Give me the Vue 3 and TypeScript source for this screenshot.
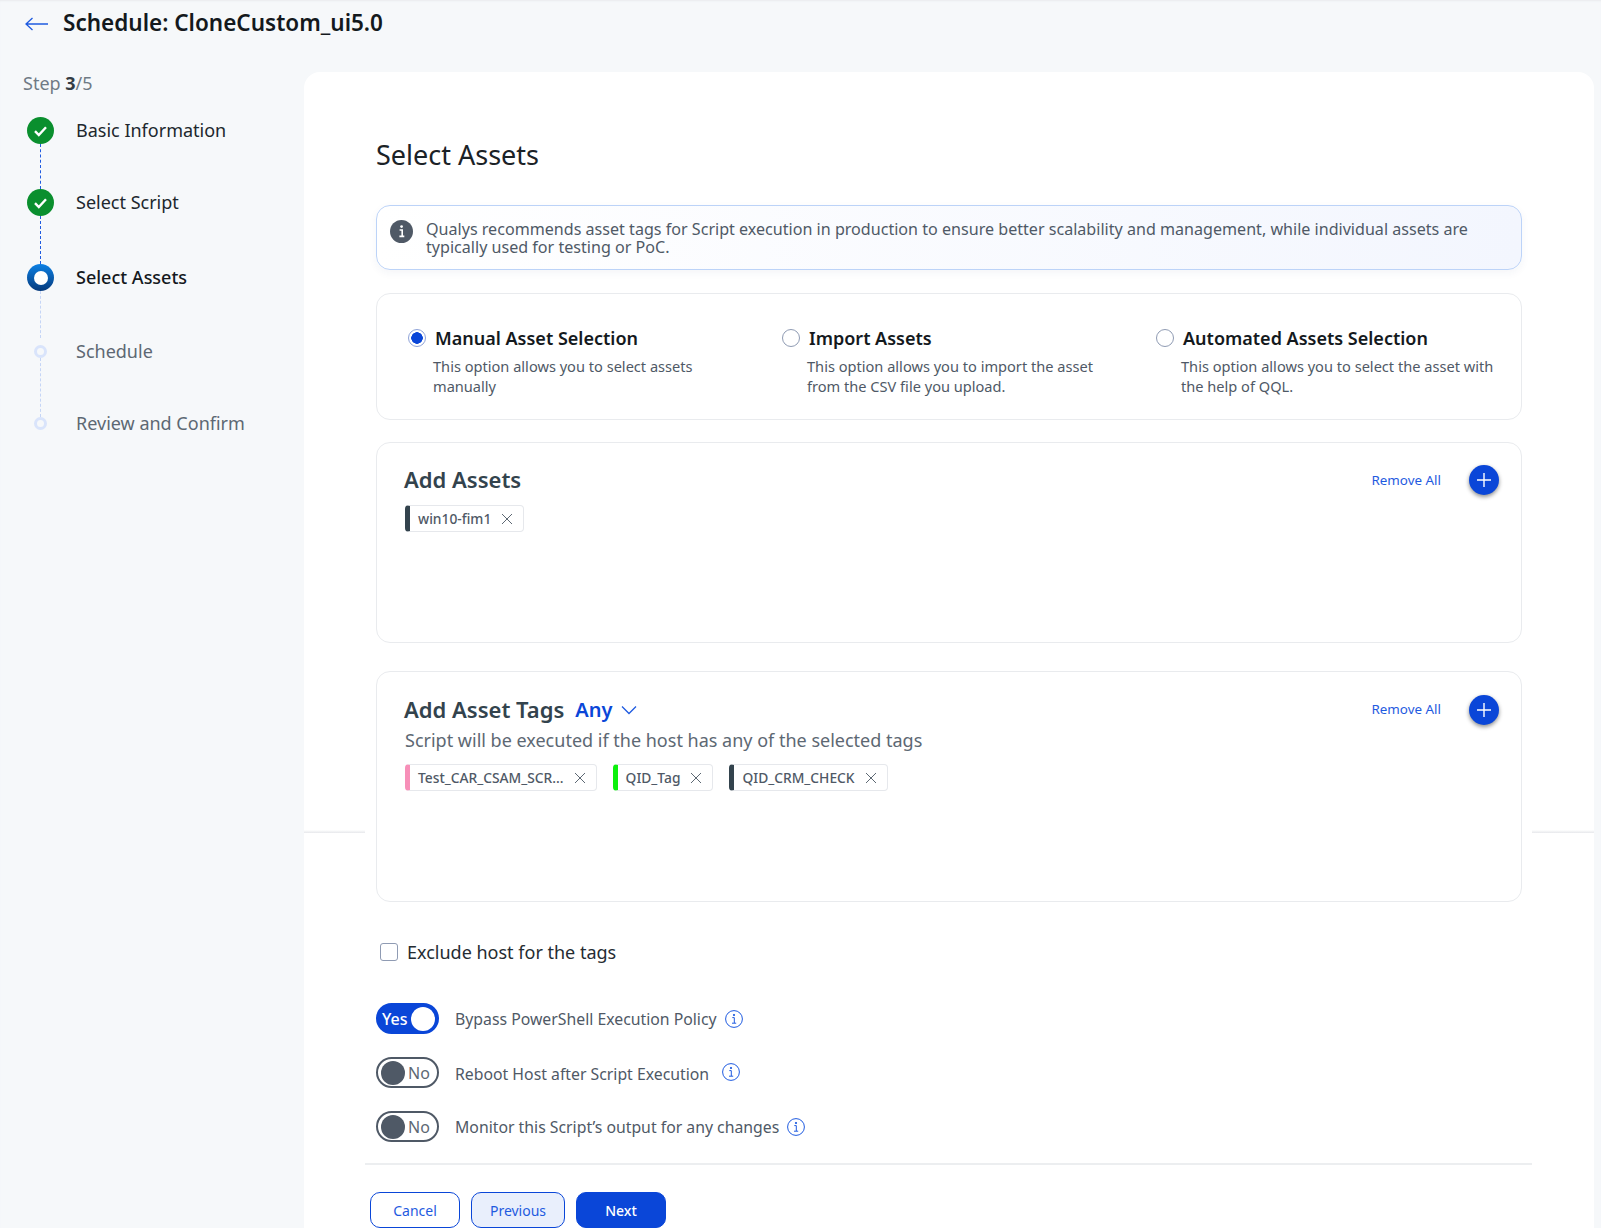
<script setup lang="ts">
interface Step {
  label: string;
  state: 'done' | 'current' | 'todo';
  gap: number;
}

interface Chip {
  label: string;
  color: string;
}

const steps: Step[] = [
  { label: 'Basic Information', state: 'done', gap: 45 },
  { label: 'Select Script', state: 'done', gap: 48 },
  { label: 'Select Assets', state: 'current', gap: 47 },
  { label: 'Schedule', state: 'todo', gap: 45 },
  { label: 'Review and Confirm', state: 'todo', gap: 0 }
];

const options = [
  { title: 'Manual Asset Selection', text: 'This option allows you to select assets manually', checked: true },
  { title: 'Import Assets', text: 'This option allows you to import the asset from the CSV file you upload.', checked: false },
  { title: 'Automated Assets Selection', text: 'This option allows you to select the asset with the help of QQL.', checked: false }
];

const assets: Chip[] = [{ label: 'win10-fim1', color: '#33434d' }];

const tags: Chip[] = [
  { label: 'Test_CAR_CSAM_SCR...', color: '#f78fb8' },
  { label: 'QID_Tag', color: '#0cf00c' },
  { label: 'QID_CRM_CHECK', color: '#33434d' }
];

const toggles = [
  { label: 'Bypass PowerShell Execution Policy', on: true },
  { label: 'Reboot Host after Script Execution', on: false },
  { label: 'Monitor this Script’s output for any changes', on: false }
];
</script>

<template>
  <div class="page">
    <header class="top">
      <svg class="back" width="24" height="14" viewBox="0 0 24 14" fill="none" stroke="#1f5be0" stroke-width="1.3">
        <path d="M1 7h22M7.5 1 1 7l6.5 6" />
      </svg>
      <h1 class="title">Schedule: CloneCustom_ui5.0</h1>
    </header>

    <div class="body">
      <aside class="side">
        <div class="step-count">Step <b>3</b>/5</div>
        <ol class="steps">
          <li
            v-for="step in steps"
            :key="step.label"
            class="step"
            :class="step.state"
            :style="{ marginBottom: step.gap + 'px' }"
          >
            <span class="marker">
              <svg v-if="step.state === 'done'" width="15" height="12" viewBox="0 0 15 12" fill="none" stroke="#fff" stroke-width="2.4">
                <path d="M2 6.2 5.8 10 13 2.2" />
              </svg>
              <span v-else class="hole"></span>
            </span>
            <span
              v-if="step.gap"
              class="link"
              :style="{ height: (step.state === 'todo' ? step.gap + 14 : step.gap) + 'px' }"
            ></span>
            <span class="step-label">{{ step.label }}</span>
          </li>
        </ol>
      </aside>

      <main class="panel">
        <h2 class="panel-title">Select Assets</h2>

        <div class="notice">
          <svg class="notice-icon" width="23" height="23" viewBox="0 0 23 23">
            <circle cx="11.5" cy="11.5" r="11.5" fill="#4f5966" />
            <path d="M9.6 10h2.6v6.2M9.4 16.4h4.9" fill="none" stroke="#fff" stroke-width="1.6" />
            <circle cx="11.6" cy="6.6" r="1.4" fill="#fff" />
          </svg>
          <p>Qualys recommends asset tags for Script execution in production to ensure better scalability and management, while individual assets are typically used for testing or PoC.</p>
        </div>

        <section class="card modes">
          <div v-for="opt in options" :key="opt.title" class="mode">
            <div class="mode-head">
              <span class="radio" :class="{ checked: opt.checked }"></span>
              <span class="mode-title">{{ opt.title }}</span>
            </div>
            <p class="mode-text">{{ opt.text }}</p>
          </div>
        </section>

        <section class="card assets">
          <div class="card-head">
            <h3>Add Assets</h3>
            <a class="remove">Remove All</a>
            <button class="plus">
              <svg width="16" height="16" viewBox="0 0 16 16" stroke="#fff" stroke-width="1.4"><path d="M8 1v14M1 8h14" /></svg>
            </button>
          </div>
          <div class="chips">
            <span v-for="c in assets" :key="c.label" class="chip" :style="{ borderLeftColor: c.color }">
              {{ c.label }}
              <svg width="12" height="12" viewBox="0 0 12 12" stroke="#5d6873" stroke-width="1"><path d="M1 1l10 10M11 1 1 11" /></svg>
            </span>
          </div>
        </section>

        <section class="card tags">
          <div class="card-head">
            <h3>Add Asset Tags</h3>
            <span class="any">Any</span>
            <svg class="chev" width="16" height="10" viewBox="0 0 16 10" fill="none" stroke="#1f5be0" stroke-width="1.3"><path d="M1 1.5 8 8.5l7-7" /></svg>
            <a class="remove">Remove All</a>
            <button class="plus">
              <svg width="16" height="16" viewBox="0 0 16 16" stroke="#fff" stroke-width="1.4"><path d="M8 1v14M1 8h14" /></svg>
            </button>
          </div>
          <p class="tags-text">Script will be executed if the host has any of the selected tags</p>
          <div class="chips">
            <span v-for="c in tags" :key="c.label" class="chip" :style="{ borderLeftColor: c.color }">
              {{ c.label }}
              <svg width="12" height="12" viewBox="0 0 12 12" stroke="#5d6873" stroke-width="1"><path d="M1 1l10 10M11 1 1 11" /></svg>
            </span>
          </div>
        </section>

        <label class="exclude">
          <span class="box"></span>
          Exclude host for the tags
        </label>

        <div class="toggles">
          <div v-for="t in toggles" :key="t.label" class="toggle-row">
            <span class="toggle" :class="{ on: t.on }">
              <span class="knob"></span>
              <span class="toggle-text">{{ t.on ? 'Yes' : 'No' }}</span>
            </span>
            <span class="toggle-label">{{ t.label }}</span>
            <svg class="info" width="18" height="18" viewBox="0 0 18 18" fill="none" stroke="#1f5be0" stroke-width="1">
              <circle cx="9" cy="9" r="8.4" />
              <path d="M7.3 7.6h2v5.4M7 13.2h4.2" />
              <circle cx="9" cy="5" r=".7" fill="#1f5be0" />
            </svg>
          </div>
        </div>

        <footer class="actions">
          <button class="btn outline">Cancel</button>
          <button class="btn soft">Previous</button>
          <button class="btn solid">Next</button>
        </footer>
      </main>
    </div>
  </div>
</template>

<style scoped>
.page {
  height: 1228px;
  overflow: hidden;
  background: #f6f8fa;
  box-shadow: inset 0 2px 2px -1px #e9ebee;
  font-family: "Noto Sans", sans-serif;
  color: #1b2227;
}

.top {
  height: 72px;
  display: flex;
  align-items: flex-start;
  padding: 8px 0 0 25px;
  box-sizing: border-box;
}

.back {
  margin: 9px 14px 0 0;
}

.title {
  margin: 0;
  font-size: 22.5px;
  line-height: 30px;
  font-weight: 600;
  color: #14191d;
}

.body {
  display: grid;
  grid-template-columns: 304px 1290px;
}

.side {
  padding-left: 23px;
}

.step-count {
  margin-top: -1px;
  font-size: 18px;
  line-height: 24px;
  color: #6f7a85;
}

.step-count b {
  font-weight: 700;
  color: #333c44;
}

.steps {
  list-style: none;
  margin: 22px 0 0 4px;
  padding: 0;
}

.step {
  position: relative;
  height: 27px;
  display: flex;
  align-items: center;
  gap: 23px;
  font-size: 18px;
}

.marker {
  width: 27px;
  height: 27px;
  border-radius: 50%;
  display: flex;
  align-items: center;
  justify-content: center;
  flex: none;
  position: relative;
  z-index: 1;
}

.done .marker {
  background: #0a8f2e;
}

.current .marker {
  background: linear-gradient(#0c80e4, #063a7c);
}

.current .hole {
  width: 14px;
  height: 14px;
  border-radius: 50%;
  background: #fff;
}

.todo .marker {
  width: 13px;
  height: 13px;
  margin: 0 7px;
  box-sizing: border-box;
  border: 3px solid #d9e4fb;
  background: #f6f8fa;
}

.link {
  position: absolute;
  left: 13px;
  top: 27px;
  border-left: 1px dashed #1f5be0;
}

.todo .link {
  top: 20px;
  border-left-color: #c5d5f6;
}

.current .link {
  border-left-color: #c5d5f6;
}

.step-label {
  margin: -2px 0 0 -1px;
  color: #20272d;
}

.current .step-label {
  font-weight: 500;
  color: #14191d;
}

.todo .step-label {
  color: #5d6873;
}

.panel {
  position: relative;
  height: 1156px;
  box-sizing: border-box;
  padding: 65px 72px 0;
  background: #fff;
  border-radius: 16px 16px 0 0;
}

.panel::before,
.panel::after {
  content: "";
  position: absolute;
  top: 758px;
  height: 3px;
  background: linear-gradient(#fff, #e6e8eb);
}

.panel::before {
  left: 0;
  width: 61px;
}

.panel::after {
  right: 0;
  width: 62px;
}

.panel-title {
  margin: 0 0 32px;
  font-size: 27px;
  line-height: 36px;
  font-weight: 400;
  color: #1b2227;
}

.notice {
  height: 65px;
  box-sizing: border-box;
  display: flex;
  align-items: flex-start;
  padding: 14px 20px 0 13px;
  border: 1px solid #bcd3f8;
  border-radius: 14px;
  background: linear-gradient(90deg, #fff, #f3f6fe);
  box-shadow: 0 3px 8px rgba(40, 60, 110, 0.05);
}

.notice-icon {
  flex: none;
  margin: 0 13px 0 0;
}

.notice p {
  margin: 0;
  font-size: 16.1px;
  line-height: 18px;
  color: #4f5966;
}

.card {
  border: 1px solid #e9ebee;
  border-radius: 14px;
  box-sizing: border-box;
  background: #fff;
  position: relative;
  z-index: 1;
}

.modes {
  height: 127px;
  margin-top: 23px;
  padding: 32px 0 0 31px;
  display: grid;
  grid-template-columns: repeat(3, 374px);
}

.mode-head {
  display: flex;
  align-items: center;
  gap: 9px;
  height: 24px;
}

.radio {
  width: 18px;
  height: 18px;
  box-sizing: border-box;
  border-radius: 50%;
  border: 1px solid #8f9bb3;
  background: #fff;
  flex: none;
}

.radio.checked {
  border-color: #8fa3d8;
  background: radial-gradient(circle, #0a46d8 0 5.5px, #fff 6px);
}

.mode-title {
  font-size: 18px;
  font-weight: 600;
  color: #14191d;
}

.mode-text {
  margin: 6px 0 0 25px;
  max-width: 318px;
  font-size: 14.6px;
  line-height: 20px;
  color: #4f5966;
}

.assets {
  height: 201px;
  margin-top: 22px;
  padding: 21px 22px 0 28px;
}

.tags {
  height: 231px;
  margin-top: 28px;
  padding: 21px 22px 0 28px;
}

.card-head {
  display: flex;
  align-items: center;
  height: 32px;
}

.card-head h3 {
  margin: -2px 0 0 -1px;
  font-size: 22px;
  font-weight: 600;
  color: #33434d;
}

.tags .card-head h3 {
  margin-top: 0;
}

.any {
  margin-left: 11px;
  font-size: 20px;
  font-weight: 600;
  color: #0a46d8;
}

.chev {
  margin: 2px 0 0 9px;
}

.remove {
  margin-left: auto;
  font-size: 13.4px;
  color: #1f5be0;
}

.plus {
  width: 30px;
  height: 30px;
  margin-left: 28px;
  padding: 0;
  border: none;
  border-radius: 50%;
  background: #0a46d8;
  box-shadow: 0 2px 4px rgba(0, 0, 0, 0.45);
  display: flex;
  align-items: center;
  justify-content: center;
}

.tags .plus {
  margin-top: 2px;
}

.chips {
  display: flex;
  gap: 16px;
  margin-top: 9px;
}

.chip {
  height: 27px;
  box-sizing: border-box;
  display: inline-flex;
  align-items: center;
  gap: 10px;
  padding: 0 10px 0 8px;
  border: 1px solid #e6e8ec;
  border-left: 5px solid #33434d;
  border-radius: 4px;
  font-size: 13.8px;
  font-weight: 500;
  color: #4f5966;
}

.tags-text {
  margin: 0;
  font-size: 18px;
  line-height: 30px;
  color: #5d6873;
}

.exclude {
  display: flex;
  align-items: center;
  gap: 9px;
  height: 24px;
  margin: 38px 0 0 4px;
  font-size: 18px;
  color: #252c32;
}

.box {
  width: 18px;
  height: 18px;
  box-sizing: border-box;
  border: 1px solid #8f9bb3;
  border-radius: 3px;
}

.toggles {
  margin-top: 39px;
  display: flex;
  flex-direction: column;
  gap: 23px;
}

.toggle-row {
  display: flex;
  align-items: center;
  height: 31px;
}

.toggle {
  width: 63px;
  height: 31px;
  box-sizing: border-box;
  border-radius: 16px;
  border: 2px solid #4f5966;
  display: flex;
  align-items: center;
  gap: 3px;
  padding: 0 2px 0 3px;
  font-size: 16px;
  color: #5d6873;
  flex: none;
}

.toggle.on {
  flex-direction: row-reverse;
  justify-content: space-between;
  border-color: #0a46d8;
  background: #0a46d8;
  color: #fff;
  font-weight: 500;
  padding: 0 2px 0 4px;
}

.knob {
  width: 24px;
  height: 24px;
  border-radius: 50%;
  background: #4f5966;
  flex: none;
}

.on .knob {
  background: #fff;
}

.toggle-label {
  margin-left: 16px;
  font-size: 15.8px;
  color: #4f5966;
}

.info {
  margin-left: 8px;
}

.toggle-row:nth-child(2) .toggle-label {
  margin-top: 2px;
}

.toggle-row:nth-child(2) .info {
  margin: -2px 0 0 13px;
}

.actions {
  margin: 21px -10px 0 -11px;
  border-top: 2px solid #eceef0;
  padding: 27px 0 0 5px;
  display: flex;
  gap: 11px;
}

.btn {
  height: 36px;
  box-sizing: border-box;
  border-radius: 10px;
  border: 1px solid #0a46d8;
  font-family: inherit;
  font-size: 14px;
  color: #1f5be0;
  background: #fff;
}

.outline {
  width: 90px;
}

.soft {
  width: 94px;
  background: #e9effc;
}

.solid {
  width: 90px;
  background: #0a46d8;
  color: #fff;
  font-weight: 500;
}
</style>

<style>
body {
  overflow: hidden;
}
</style>
